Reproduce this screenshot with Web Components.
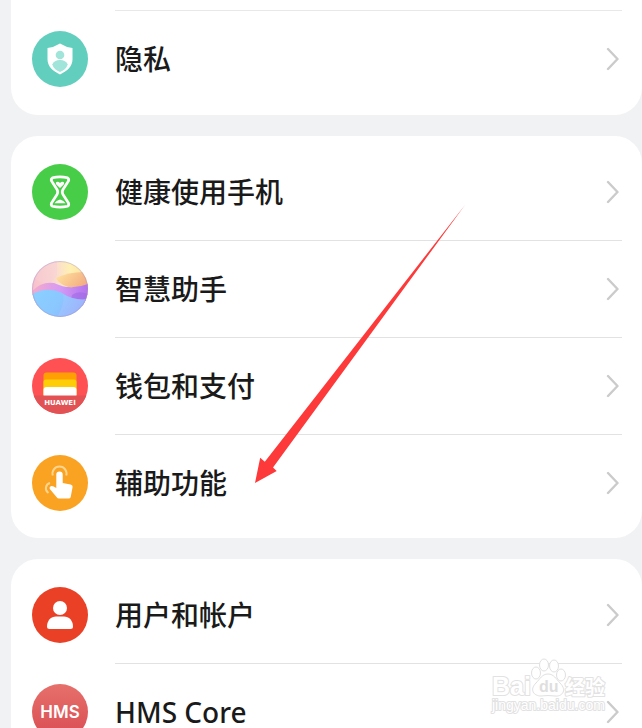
<!DOCTYPE html>
<html lang="zh-CN">
<head>
<meta charset="utf-8">
<meta name="viewport" content="width=device-width, initial-scale=1">
<title>设置</title>
<style>
  html, body { margin: 0; height: 100%; overflow: hidden; }
  body { background: #f1f2f4; color: #1a1a1a; font-family: "Noto Sans", "Noto Sans CJK SC", sans-serif; }
</style>
</head>
<body>
<settings-page>
  <settings-card continued>
    <settings-row label="隐私" href="#privacy">
      <svg viewBox="0 0 56 56" aria-hidden="true"><circle cx="28" cy="28" r="28" fill="#61cebe"/><path d="M28 12.5Q34 16.300 40.500 17V28.500C40.500 35 35.500 40 28 43.500C20.500 40 15.500 35 15.500 28.500V17Q22 16.300 28 12.500Z" fill="#fff"/><circle cx="28" cy="24" r="4.300" fill="#a0e4da"/><path d="M20.300 33.500C21.200 30.500 24.300 29 28 29S34.800 30.500 35.700 33.500C34.500 37.500 31.500 39.700 28 41C24.500 39.700 21.500 37.500 20.300 33.500Z" fill="#a0e4da"/></svg>
    </settings-row>
  </settings-card>
  <settings-card>
    <settings-row label="健康使用手机" href="#wellbeing">
      <svg viewBox="0 0 56 56" aria-hidden="true"><circle cx="28" cy="28" r="28" fill="#48cd48"/><path d="M20.500 13.800Q28 12 35.500 13.800Q37.300 15 36.500 17L31 25.500Q29.500 28 31 30.500L36.500 39Q37.300 41.500 35.500 42.300Q28 44 20.500 42.300Q18.700 41.500 19.500 39L25 30.500Q26.500 28 25 25.500L19.500 17Q18.700 15 20.500 13.800Z" fill="none" stroke="#fff" stroke-width="2.700"/><path d="M28 24L24.500 20.700C22.300 18 26.200 16.800 28 19C29.800 16.800 33.700 18 31.500 20.700ZM22.500 39.300Q24 36.800 28 35.500Q32 36.800 33.500 39.300Z" fill="#fff"/></svg>
    </settings-row>
    <settings-row label="智慧助手" href="#assistant">
      <svg viewBox="0 0 56 56" aria-hidden="true">
        <defs>
          <clipPath id="ball"><circle cx="28" cy="28" r="28"/></clipPath>
          <linearGradient id="warm" x1="0" y1=".4" x2="1" y2=".3"><stop stop-color="#f7bfcb"/><stop offset=".45" stop-color="#fadcd0"/><stop offset=".7" stop-color="#fff0b4"/><stop offset="1" stop-color="#ffe09a"/></linearGradient>
          <linearGradient id="gold" x1="0" y1="0" x2="1" y2=".5"><stop stop-color="#ffe6a0"/><stop offset="1" stop-color="#f4ae82"/></linearGradient>
          <linearGradient id="rose"><stop stop-color="#f5aacb"/><stop offset=".5" stop-color="#d59af4"/><stop offset="1" stop-color="#b272ed"/></linearGradient>
          <linearGradient id="sky" x1="0" y1=".3" x2="1" y2=".6"><stop stop-color="#8bcfff"/><stop offset=".5" stop-color="#8ac7ff"/><stop offset="1" stop-color="#95a7fb"/></linearGradient>
        </defs>
        <g clip-path="url(#ball)"><path fill="url(#warm)" d="M0 0H56V56H0Z"/><path d="M0 0H25V13Q22 21 14 22Q7 22 0 15Z" fill="#f8d0d6" opacity=".5"/><path d="M24 17Q38 10 56 11V28L36 26Q27 23 24 17Z" fill="url(#gold)"/><path d="M0 30Q10 20 22 22Q38 30 56 23V45H0Z" fill="url(#rose)"/><path d="M40 34Q46 29 56 33V43H38Z" fill="#9865e4" opacity=".5"/><path d="M0 33Q16 25 30 32Q42 40 56 38V56H0Z" fill="url(#sky)"/><path d="M31 33Q33 44 25 56H56V38Q42 40 31 33Z" fill="#bfcaff" opacity=".25"/></g>
        <circle cx="28" cy="28" r="27.500" fill="none" stroke="#a08fd0" opacity=".4"/>
      </svg>
    </settings-row>
    <settings-row label="钱包和支付" href="#wallet">
      <svg viewBox="0 0 56 56" aria-hidden="true"><circle cx="28" cy="28" r="28" fill="#ff5154"/><path d="M1.700 37.500H54.300A28 28 0 0 1 1.700 37.500Z" fill="#e25153"/><path d="M11.500 37V17.500Q11.500 14.500 14.500 14.500H41.500Q44.500 14.500 44.500 17.500V37Z" fill="#ff9f04"/><path d="M11.500 37V24Q11.500 21.500 14 21.500H42Q44.500 21.500 44.500 24V37Z" fill="#ffcd08"/><path d="M11.500 37.500V32Q11.500 29 14.500 29H41.500Q44.500 29 44.500 32V37.500Z" fill="#fff"/><text x="28" y="47" text-anchor="middle" font-family="DejaVu Sans, sans-serif" font-weight="700" font-size="7" fill="#fff">HUAWEI</text></svg>
    </settings-row>
    <settings-row label="辅助功能" href="#accessibility">
      <svg viewBox="0 0 56 56" aria-hidden="true"><circle cx="28" cy="28" r="28" fill="#faa222"/><path d="M24.300 33V19.500Q24.300 16.500 27.500 16.500T30.700 19.500V28L38.500 29.500Q41 30 40.500 32.500L38.700 42Q38.400 43.500 36.500 43.500H27Q25.500 43.500 24.500 42L17.800 34Q17 31.500 19.500 31Q21 30.800 24.300 33Z" fill="#fff"/><path d="M20.800 20.500A7 7 0 1 1 34.200 20.500M18 28A5.500 5.500 0 0 0 16.500 38M16 27.500" fill="none" stroke="#ffd58d" stroke-width="2"/></svg>
    </settings-row>
  </settings-card>
  <settings-card>
    <settings-row label="用户和帐户" href="#accounts">
      <svg viewBox="0 0 56 56" aria-hidden="true"><circle cx="28" cy="28" r="28" fill="#e94026"/><circle cx="28" cy="21" r="7" fill="#fff"/><path d="M15 39.500C15 33.500 19 29.500 24 29.500H32C37 29.500 41 33.500 41 39.500Q41 42 38.500 42H17.500Q15 42 15 39.500Z" fill="#fff"/></svg>
    </settings-row>
    <settings-row label="HMS Core" href="#hms">
      <svg viewBox="0 0 56 56" aria-hidden="true"><defs><linearGradient id="hms" x2="0" y2="1"><stop stop-color="#e6706b"/><stop offset="1" stop-color="#d94c52"/></linearGradient></defs><circle cx="28" cy="28" r="28" fill="url(#hms)"/><text x="28" y="34" text-anchor="middle" font-family="Inter, sans-serif" font-weight="600" font-size="17" fill="#fff">HMS</text></svg>
    </settings-row>
  </settings-card>
  <pointer-arrow slot="overlay"></pointer-arrow>
  <site-watermark slot="overlay"></site-watermark>
</settings-page>

<script>
  const define = (name, html, setup) => customElements.define(name, class extends HTMLElement {
    constructor() {
      super();
      const template = document.createElement('template');
      template.innerHTML = html;
      this.attachShadow({ mode: 'open' }).append(template.content.cloneNode(true));
    }
    connectedCallback() { if (setup) setup(this); }
  });

  define('settings-page', `
    <style>
      :host { display: block; position: relative; height: 100vh; overflow: hidden; }
      main { display: flex; flex-direction: column; gap: 21px; padding-left: 11px; }
    </style>
    <main><slot></slot></main><slot name="overlay"></slot>`);

  define('settings-card', `
    <style>
      :host { display: block; background: #fff; border-radius: 27px; padding: 7px 20px 7px 21px; --first-line: transparent; }
      :host([continued]) { border-radius: 0 0 27px 27px; padding-top: 10px; padding-bottom: 8px; --first-line: #e8e8e8; }
      ::slotted(:first-child) { --line: var(--first-line); }
    </style>
    <slot></slot>`);

  define('settings-row', `
    <style>
      :host { display: block; }
      a { display: flex; align-items: center; gap: 27px; height: 97px; color: inherit; text-decoration: none; }
      .icon { display: flex; flex: none; width: 56px; height: 56px; }
      ::slotted(svg) { width: 56px; height: 56px; }
      .content { box-sizing: border-box; display: flex; flex: 1; align-items: center; justify-content: space-between; height: 100%; border-top: 1px solid var(--line, #e2e2e2); padding-right: 3px; }
      .label { font-size: 28px; line-height: 40px; font-weight: 500; white-space: nowrap; }
      .label:lang(en) { font-family: Inter, "Noto Sans", sans-serif; font-weight: 400; }
      .chevron { width: 13px; height: 24px; fill: none; stroke: #cbcbcb; stroke-width: 2.400; stroke-linecap: round; stroke-linejoin: round; }
    </style>
    <a><span class="icon"><slot></slot></span><span class="content"><span class="label"></span>
      <svg class="chevron" viewBox="0 0 13 24" aria-hidden="true"><path d="M2 2L11.500 12L2 22"/></svg></span></a>`,
    el => {
      el.shadowRoot.querySelector('.label').textContent = el.getAttribute('label');
      el.shadowRoot.querySelector('a').href = el.getAttribute('href');
    });

  define('pointer-arrow', `
    <style>
      :host { position: absolute; left: 255px; top: 205px; pointer-events: none; }
      svg { display: block; width: 210px; height: 279px; }
    </style>
    <svg viewBox="0 0 210 279" aria-hidden="true"><path d="M210 0L9.800 256.800L5.200 252.800L0 278L21.700 266L18 262.500Z" fill="#fd3939"/></svg>`);

  define('site-watermark', `
    <style>
      :host { position: absolute; right: 34px; bottom: 12px; pointer-events: none; }
      svg { display: block; width: 118px; height: 58px; }
      text { fill: #fff; stroke: #e2e2e2; stroke-width: 2; paint-order: stroke; stroke-linejoin: round; font-family: "Liberation Sans", "Noto Sans CJK SC", sans-serif; }
      .paw { fill: #fff; stroke: #e0e0e0; }
      .du { fill: #dedede; stroke: none; }
    </style>
    <svg viewBox="0 0 118 58" role="img" aria-label="Baidu 经验">
      <text x="2" y="37" font-size="25" font-weight="700">Bai</text>
      <g class="paw"><ellipse cx="46" cy="15" rx="4.500" ry="6"/><ellipse cx="54" cy="7" rx="4.500" ry="6"/><ellipse cx="64" cy="8" rx="4.500" ry="6"/><ellipse cx="71" cy="17" rx="4.500" ry="6"/><path d="M58 16C64 16 66 21 70 25C78 33 71 39 65 38Q58 37 51 38C44 38 39 32 46 25C50 21 52 16 58 16Z"/></g>
      <text class="du" x="49" y="34" font-size="16" font-weight="700">du</text>
      <text x="75" y="37" font-size="20" font-weight="700">经验</text>
      <text x="2" y="52" font-size="14">jingyan.baidu.com</text>
    </svg>`);
</script>
</body>
</html>
